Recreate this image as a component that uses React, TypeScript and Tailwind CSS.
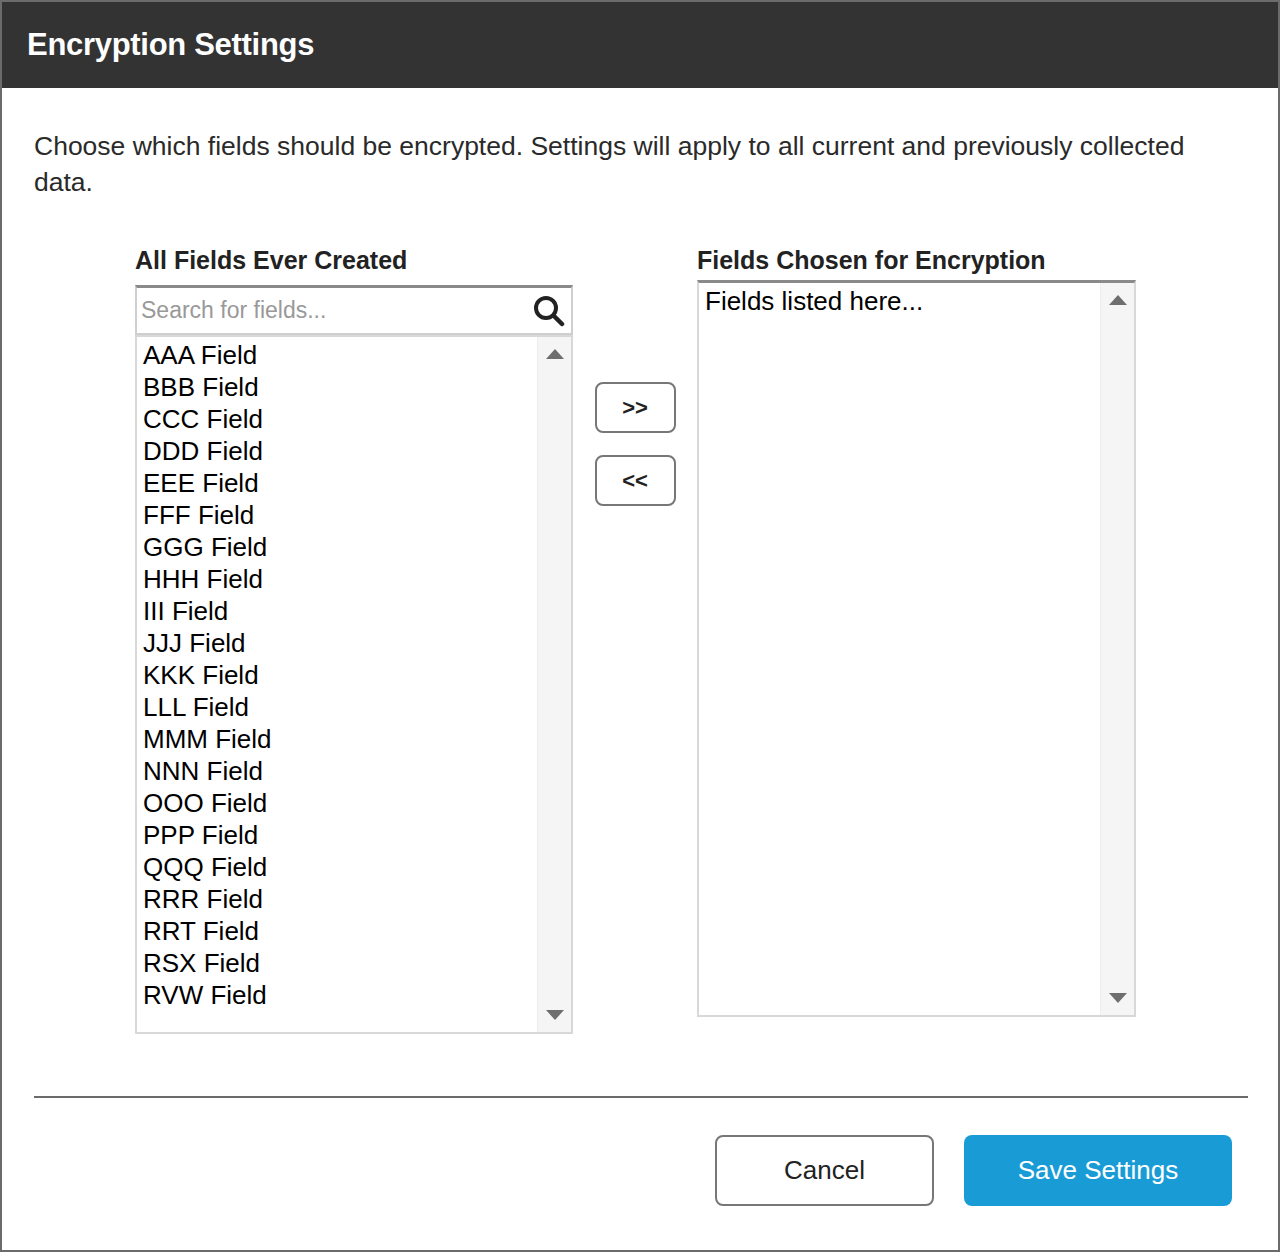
const FIELDS = [
  "AAA", "BBB", "CCC", "DDD", "EEE", "FFF", "GGG", "HHH", "III", "JJJ", "KKK",
  "LLL", "MMM", "NNN", "OOO", "PPP", "QQQ", "RRR", "RRT", "RSX", "RVW",
];

function Scrollbar() {
  return (
    <div className="w-[34px] shrink-0 bg-[#f5f5f5] border-l border-[#ececec] flex flex-col items-center justify-between py-[12px]">
      <svg width="18" height="10" viewBox="0 0 18 10"><path d="M0 10 L9 0 L18 10 Z" fill="#6e6e6e" /></svg>
      <svg width="18" height="10" viewBox="0 0 18 10"><path d="M0 0 L9 10 L18 0 Z" fill="#6e6e6e" /></svg>
    </div>
  );
}

export default function App() {
  return (
    <div className="w-[1280px] h-[1252px] border-2 border-[#6b6b6b] bg-white flex flex-col text-[#222]" style={{ fontFamily: '"Liberation Sans", Arial, sans-serif' }}>
      <div className="h-[86px] bg-[#333333] flex items-center px-[25px] shrink-0">
        <h1 className="text-white text-[31px] font-bold tracking-[-0.3px]">Encryption Settings</h1>
      </div>
      <div className="px-[32px] pt-[40px] flex flex-col">
        <p className="text-[26.5px] leading-[36px] text-[#2a2a2a]">
          Choose which fields should be encrypted. Settings will apply to all current and previously collected data.
        </p>
        <div className="flex ml-[101px] mt-[44px] items-start">
          <div className="w-[438px] flex flex-col">
            <div className="text-[25px] font-bold leading-[32px] h-[41px]">All Fields Ever Created</div>
            <div className="h-[50px] border-2 border-t-[3px] border-[#cfcfcf] border-t-[#8a8a8a] flex items-center pl-[4px] pr-[6px]">
              <span className="flex-1 text-[23px] text-[#999]">Search for fields...</span>
              <svg width="32" height="32" viewBox="0 0 32 32">
                <circle cx="13" cy="13" r="10" fill="none" stroke="#222" strokeWidth="4" />
                <path d="M20.5 20.5 L29 29" stroke="#222" strokeWidth="4.5" strokeLinecap="round" />
              </svg>
            </div>
            <div className="h-[699px] border-2 border-[#d8d8d8] flex">
              <div className="flex-1 pl-[6px] pt-[2px]">
                {FIELDS.map((f) => (
                  <div key={f} className="text-[26px] leading-[32px] text-black">{f} Field</div>
                ))}
              </div>
              <Scrollbar />
            </div>
          </div>
          <div className="w-[124px] flex flex-col items-center gap-[22px] pt-[138px]">
            <button className="w-[81px] h-[51px] rounded-[8px] border-2 border-[#777] text-[22px] font-bold bg-white">&gt;&gt;</button>
            <button className="w-[81px] h-[51px] rounded-[8px] border-2 border-[#777] text-[22px] font-bold bg-white">&lt;&lt;</button>
          </div>
          <div className="w-[439px] flex flex-col">
            <div className="text-[25px] font-bold leading-[32px] h-[36px]">Fields Chosen for Encryption</div>
            <div className="h-[737px] border-2 border-t-[3px] border-[#d8d8d8] border-t-[#8a8a8a] flex">
              <div className="flex-1 pl-[6px] pt-[2px] text-[26px] leading-[32px] text-black">Fields listed here...</div>
              <Scrollbar />
            </div>
          </div>
        </div>
        <div className="mt-[62px] h-[2px] bg-[#6b6b6b] w-[1214px]" />
        <div className="flex justify-end gap-[30px] mt-[37px] pr-[14px]">
          <button className="w-[219px] h-[71px] rounded-[8px] border-2 border-[#777] bg-white text-[26px] text-[#222]">Cancel</button>
          <button className="w-[268px] h-[71px] rounded-[8px] bg-[#199cd6] text-white text-[26px]">Save Settings</button>
        </div>
      </div>
    </div>
  );
}
